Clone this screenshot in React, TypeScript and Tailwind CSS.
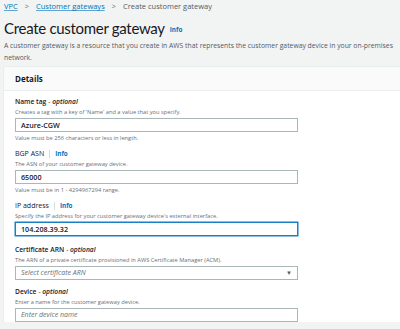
import React from 'react';

const Info = ({ divider = false }: { divider?: boolean }) => (
  <span className="flex items-center">
    {divider && <span className="mx-[5px] h-[8px] w-px bg-[#d5dbdb]"></span>}
    <span className="text-[6.3px] font-bold text-[#0073bb]">Info</span>
  </span>
);

type FieldProps = {
  label: string;
  optional?: boolean;
  info?: boolean;
  help: string;
  value?: string;
  placeholder?: string;
  focused?: boolean;
  select?: boolean;
  constraint?: string;
  className?: string;
};

const Field = ({ label, optional, info, help, value, placeholder, focused, select, constraint, className }: FieldProps) => (
  <div className={`flex flex-col ${className ?? ''}`}>
    <div className="flex h-[10px] items-center text-[7px] leading-[10px] text-[#16191f]">
      <span className={optional ? 'text-[6.7px] font-semibold' : ''}>{label}</span>
      {optional && <span className="ml-[2px] text-[6.7px] font-semibold italic"> - optional</span>}
      {info && <Info divider />}
    </div>
    <div className="h-[10px] text-[5.7px] leading-[10px] text-[#687078]">{help}</div>
    <div
      className={`mt-[1px] flex h-[14px] w-[283px] items-center justify-between bg-white px-[5px] ${
        focused ? 'border border-[#1a7fc4] shadow-[0_0_0_0.5px_#1a7fc4]' : 'border border-[#aab7b8]'
      }`}
    >
      {value ? (
        <span className="text-[7.2px] font-semibold text-[#16191f]">{value}</span>
      ) : (
        <span className="text-[7px] italic text-[#687078]">{placeholder}</span>
      )}
      {select && <span className="text-[6px] text-[#545b64]">▼</span>}
    </div>
    {constraint && (
      <div className="mt-[1px] h-[10px] text-[5.7px] leading-[10px] text-[#687078]">{constraint}</div>
    )}
  </div>
);

const App: React.FC = () => {
  return (
    <div
      className="h-[329px] w-[400px] overflow-hidden bg-[#f2f3f3]"
      style={{ fontFamily: '"Open Sans", "Liberation Sans", sans-serif' }}
    >
      {/* Breadcrumb */}
      <div className="flex h-[14px] items-center pl-[4px] text-[7.5px]">
        <span className="text-[#0073bb] underline decoration-[#0073bb]/60">VPC</span>
        <span className="mx-[7px] text-[#687078]">&gt;</span>
        <span className="text-[#0073bb] underline decoration-[#0073bb]/60">Customer gateways</span>
        <span className="mx-[7px] text-[#687078]">&gt;</span>
        <span className="text-[#545b64]">Create customer gateway</span>
      </div>

      {/* Heading */}
      <div className="mt-[3px] flex items-end pl-[4px]">
        <h1 className="font-['Lato'] text-[15px] leading-[22px] tracking-[-0.3px] text-[#16191f]">Create customer gateway</h1>
        <span className="mb-[5px] ml-[5px] text-[6.3px] font-bold text-[#0073bb]">Info</span>
      </div>
      <p className="mt-[1px] pl-[4px] text-[6.8px] leading-[12px] text-[#545b64]">
        A customer gateway is a resource that you create in AWS that represents the customer gateway device in your on-premises network.
      </p>

      {/* Panel */}
      <div className="ml-[3px] mt-[2px] border-l border-t border-[#eaeded] bg-white">
        <div className="flex h-[24px] items-center border-b border-[#eaeded] bg-[#fafafa] pl-[11px] text-[8px] font-bold text-[#16191f]">
          Details
        </div>
        <div className="flex flex-col pl-[11px] pt-[6px]">
          <Field
            label="Name tag"
            optional
            help="Creates a tag with a key of 'Name' and a value that you specify."
            value="Azure-CGW"
            constraint="Value must be 256 characters or less in length."
          />
          <Field
            className="mt-[6px]"
            label="BGP ASN"
            info
            help="The ASN of your customer gateway device."
            value="65000"
            constraint="Value must be in 1 - 4294967294 range."
          />
          <Field
            className="mt-[6px]"
            label="IP address"
            info
            help="Specify the IP address for your customer gateway device's external interface."
            value="104.208.39.32"
            focused
          />
          <Field
            className="mt-[9px]"
            label="Certificate ARN"
            optional
            help="The ARN of a private certificate provisioned in AWS Certificate Manager (ACM)."
            placeholder="Select certificate ARN"
            select
          />
          <Field
            className="mt-[7px]"
            label="Device"
            optional
            help="Enter a name for the customer gateway device."
            placeholder="Enter device name"
          />
        </div>
      </div>
    </div>
  );
};

export default App;
